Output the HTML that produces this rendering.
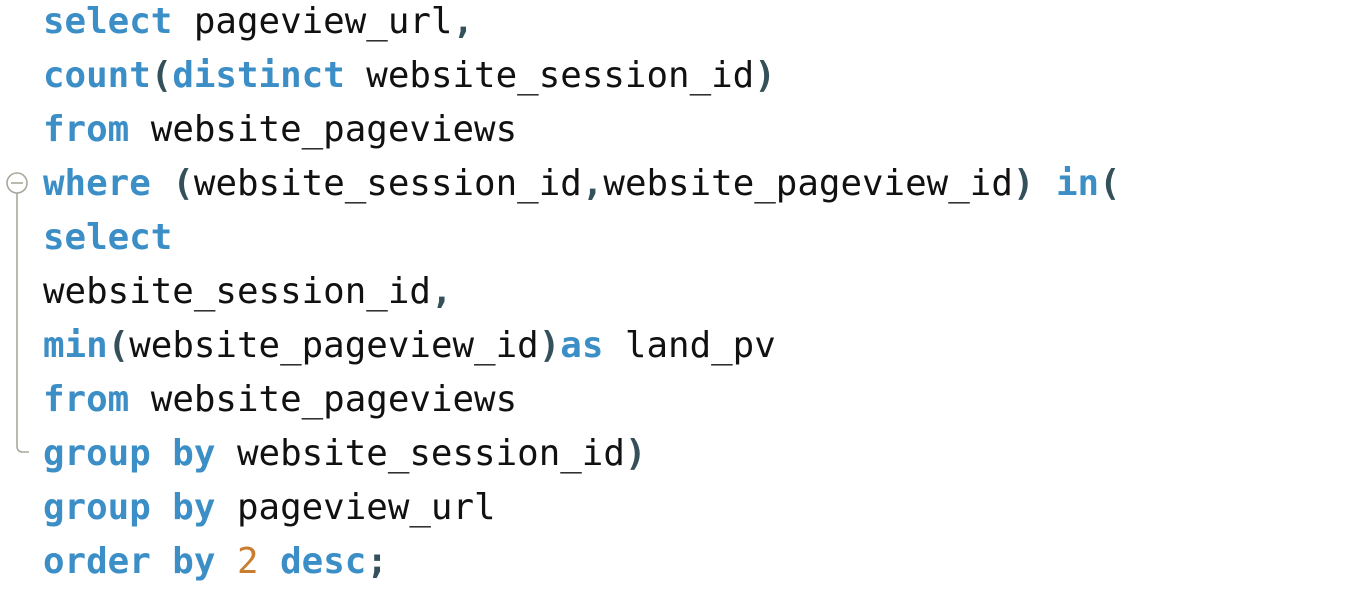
<!DOCTYPE html>
<html><head><style>
html,body{margin:0;padding:0;background:#fff;width:1354px;height:590px;overflow:hidden}
pre{position:absolute;left:43px;top:-5px;margin:0;font-family:"DejaVu Sans Mono","Liberation Mono",monospace;font-size:35.8px;line-height:54px;color:#111}
.k{color:#3b8ec6;font-weight:bold}
.p{color:#34505a;font-weight:bold}
.n{color:#c97d2e}
</style></head><body>
<svg width="60" height="590" style="position:absolute;left:0;top:0">
<circle cx="17" cy="183" r="10" fill="#fff" stroke="#a9a89b" stroke-width="1.6"/>
<line x1="11" y1="183" x2="23" y2="183" stroke="#a9a89b" stroke-width="1.6"/>
<path d="M17 193 V446 Q17 452 23 452 H29" fill="none" stroke="#a9a89b" stroke-width="1.6"/>
</svg>
<pre><span class="k">select</span> pageview_url<span class="p">,</span>
<span class="k">count</span><span class="p">(</span><span class="k">distinct</span> website_session_id<span class="p">)</span>
<span class="k">from</span> website_pageviews
<span class="k">where</span> <span class="p">(</span>website_session_id<span class="p">,</span>website_pageview_id<span class="p">)</span> <span class="k">in</span><span class="p">(</span>
<span class="k">select</span>
website_session_id<span class="p">,</span>
<span class="k">min</span><span class="p">(</span>website_pageview_id<span class="p">)</span><span class="k">as</span> land_pv
<span class="k">from</span> website_pageviews
<span class="k">group by</span> website_session_id<span class="p">)</span>
<span class="k">group by</span> pageview_url
<span class="k">order by</span> <span class="n">2</span> <span class="k">desc</span><span class="p">;</span></pre>
</body></html>
